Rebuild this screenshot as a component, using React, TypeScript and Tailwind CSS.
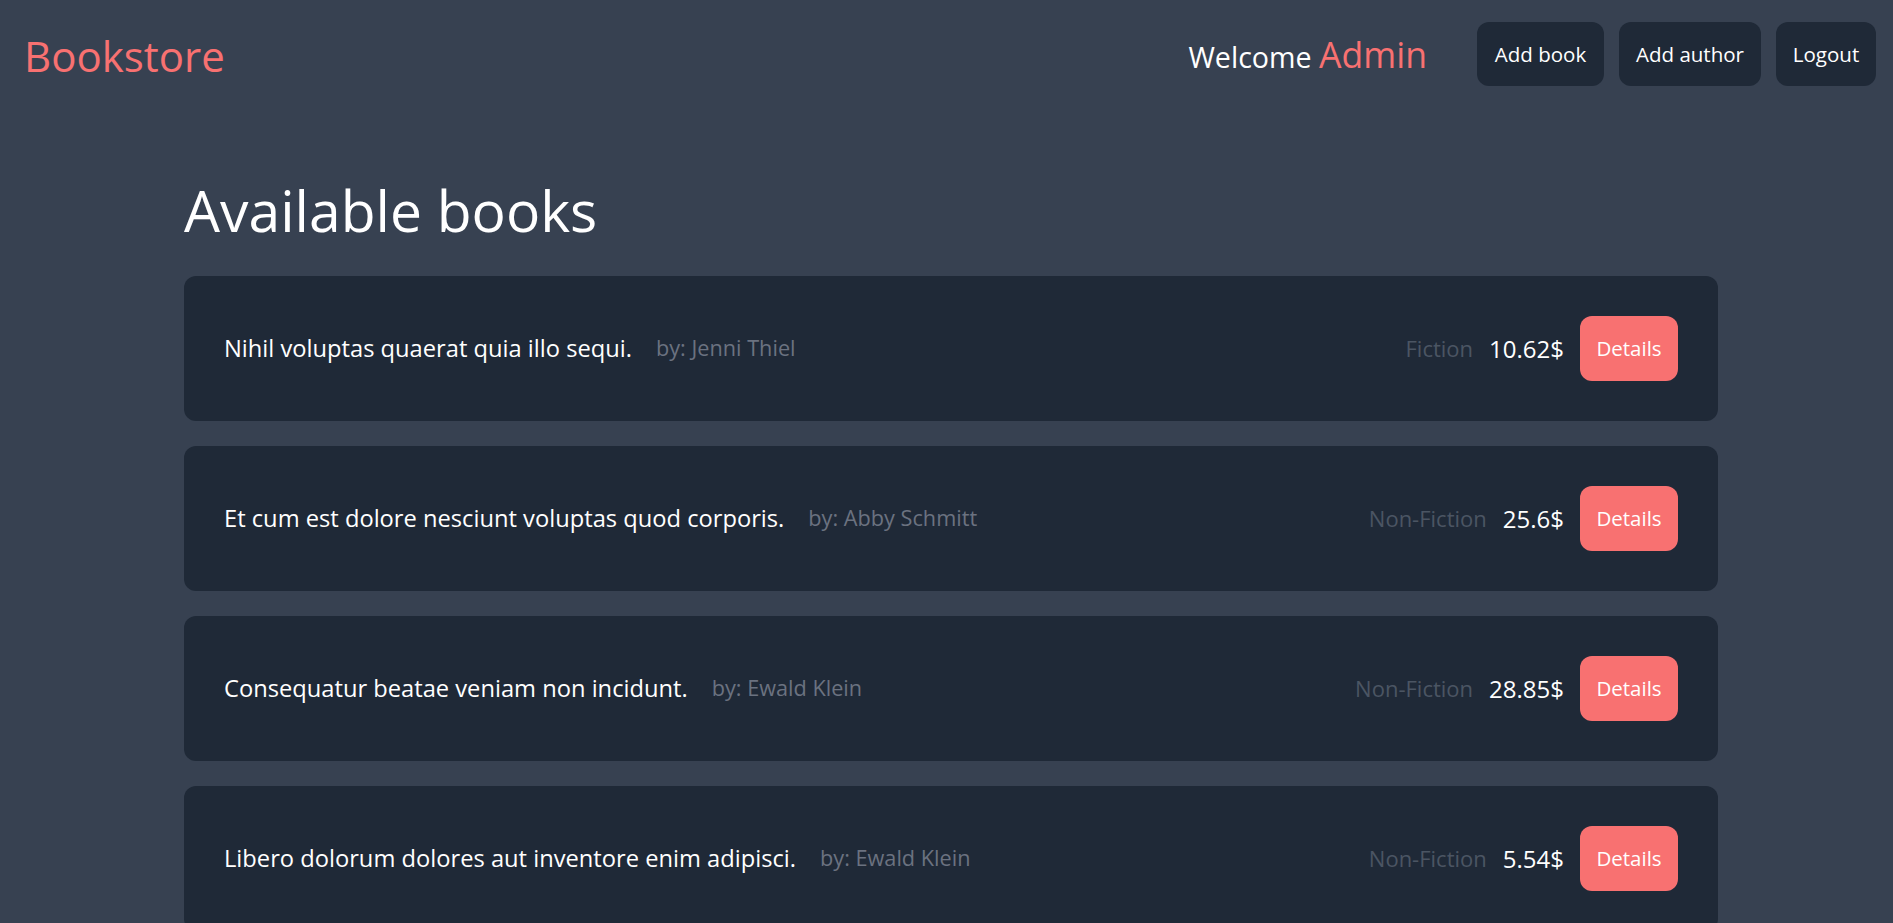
const books = [
  { title: "Nihil voluptas quaerat quia illo sequi.", author: "Jenni Thiel", category: "Fiction", price: "10.62" },
  { title: "Et cum est dolore nesciunt voluptas quod corporis.", author: "Abby Schmitt", category: "Non-Fiction", price: "25.6" },
  { title: "Consequatur beatae veniam non incidunt.", author: "Ewald Klein", category: "Non-Fiction", price: "28.85" },
  { title: "Libero dolorum dolores aut inventore enim adipisci.", author: "Ewald Klein", category: "Non-Fiction", price: "5.54" },
];

const navButtons = [
  { label: "Add book", width: "w-[127px]" },
  { label: "Add author", width: "w-[142px]" },
  { label: "Logout", width: "w-[100px]" },
];

export default function App() {
  return (
    <div className="min-h-screen bg-[#374151] text-white font-['Open_Sans',sans-serif]">
      <header className="flex items-center justify-between pl-6 pr-[17px] pt-[22px]">
        <a className="text-[42px] leading-none text-[#f87171] mt-[3px]">Bookstore</a>
        <div className="flex items-center">
          <span className="text-[28.6px] mr-[50px] mt-[2px]">
            Welcome <span className="text-[35.6px] text-[#f87171]">Admin</span>
          </span>
          <div className="flex items-center gap-[15px]">
            {navButtons.map((b) => (
              <button
                key={b.label}
                className={`${b.width} h-16 rounded-xl bg-[#1f2937] text-[20.5px] flex items-center justify-center`}
              >
                {b.label}
              </button>
            ))}
          </div>
        </div>
      </header>

      <main className="pl-[184px] pt-[96px]">
        <div className="w-[1534px]">
          <h1 className="text-[57px] leading-none mb-[37px]">Available books</h1>
          <div className="flex flex-col gap-[25px]">
            {books.map((book) => (
              <div
                key={book.title}
                className="h-[145px] flex items-center justify-between px-10 rounded-xl bg-[#1f2937]"
              >
                <div className="flex items-center gap-6">
                  <span className="text-[23.7px]">{book.title}</span>
                  <span className="text-[21.7px] text-[#6b7280]">by: {book.author}</span>
                </div>
                <div className="flex items-center gap-4">
                  <span className="text-[22px] text-[#4b5563]">{book.category}</span>
                  <span className="text-2xl">{book.price}$</span>
                  <button className="w-[98px] h-[65px] rounded-xl bg-[#f87171] text-[20.5px] flex items-center justify-center">
                    Details
                  </button>
                </div>
              </div>
            ))}
          </div>
        </div>
      </main>
    </div>
  );
}
